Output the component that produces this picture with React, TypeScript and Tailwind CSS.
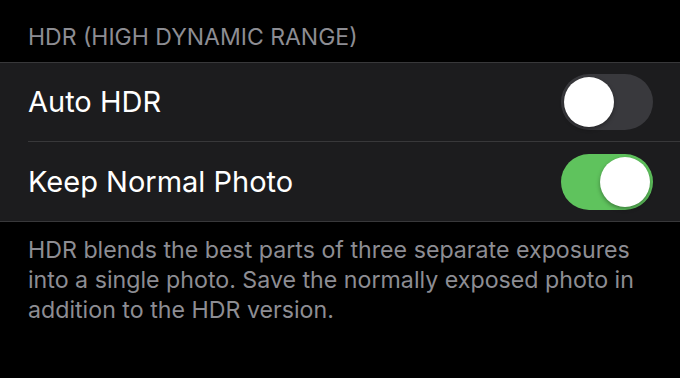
function Toggle({ on }: { on: boolean }) {
  return (
    <div
      className={`flex h-[56px] w-[92px] shrink-0 items-center rounded-full p-[3px] ${
        on ? "justify-end bg-[#5fc35d]" : "justify-start bg-[#39393d]"
      }`}
    >
      <div className="h-[50px] w-[50px] rounded-full bg-white shadow-[0_2px_4px_rgba(0,0,0,0.35)]" />
    </div>
  )
}

function Row({ label, on, divider }: { label: string; on: boolean; divider?: boolean }) {
  return (
    <div className="pl-[28px]">
      <div
        className={`flex h-[79px] items-center justify-between pr-[27px] ${
          divider ? "border-b border-[#38383a]" : ""
        }`}
      >
        <span className="text-[29px] text-white">{label}</span>
        <Toggle on={on} />
      </div>
    </div>
  )
}

export default function App() {
  return (
    <div className="h-[378px] w-[680px] overflow-hidden bg-black font-['Inter','Liberation_Sans',sans-serif]">
      <div className="flex h-[62px] items-center px-[28px] pt-[12px] text-[23px] uppercase text-[#8d8d93]">
        HDR (High Dynamic Range)
      </div>
      <div className="border-y border-[#38383a] bg-[#1c1c1e]">
        <Row label="Auto HDR" on={false} divider />
        <Row label="Keep Normal Photo" on />
      </div>
      <p className="px-[28px] pt-[13px] text-[23.2px] leading-[30px] text-[#8d8d93]">
        HDR blends the best parts of three separate exposures into a single photo. Save the normally exposed photo in
        addition to the HDR version.
      </p>
    </div>
  )
}
